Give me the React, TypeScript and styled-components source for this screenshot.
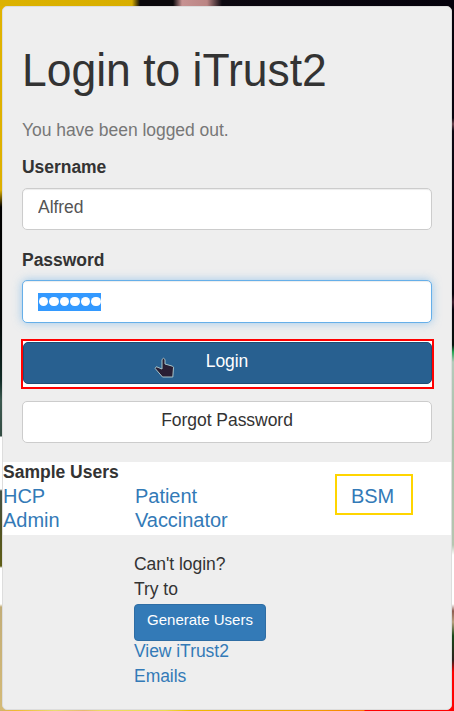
import React from "react";
import styled, { createGlobalStyle, css } from "styled-components";

const GlobalStyle = createGlobalStyle`
  *, *::before, *::after { box-sizing: border-box; }
  html, body { margin: 0; padding: 0; overflow: hidden; }
  body {
    font-family: "Liberation Sans", Arial, sans-serif;
    font-size: 17.5px;
    line-height: 25px;
    letter-spacing: -0.04px;
    color: #333;
  }
`;

const Page = styled.main`
  width: 454px;
  height: 711px;
  padding: 6px 2px 1px;
  background:
    linear-gradient(90deg, #dcb200 0, #d8ae00 132px, #0b090c 140px, #0b090c 173px, #c79292 182px, #bb8584 207px, #0c0810 222px, #05020c 100%) 0 0 / 454px 6px no-repeat,
    linear-gradient(90deg, #d2b36c 0, #f0b82f 15px, #eadb72 55px, #e8b970 84px, #edda65 100px, #eddb4e 165px, #efba00 190px, #f29a00 320px, #ff7500 364px, #f00 365px) 0 710px / 454px 1px no-repeat,
    linear-gradient(#e0b300 0, #deb000 190px, #000 207px, #030606 320px, #102b26 380px, #3c5950 400px, #344d44 436px, #fff 437px, #fff 489px, #475345 491px, #515323 530px, #5f5e16 566px, #fff 568px, #fff 604px, #c2ad78 607px, #d4ba76 711px) 0 0 / 8px 711px no-repeat,
    linear-gradient(#050209 0, #08030d 118px, #67424c 124px, #0c0711 131px, #06020a 294px, #3d2030 302px, #07030c 310px, #07120d 345px, #23a451 352px, #b4cbbb 362px, #acc0a9 440px, #b6c6b1 545px, #fff 555px, #fff 604px, #8c5c50 611px, #b8a17f 622px, #184717 636px, #2d211d 660px, #f00 672px, #f00 711px) 446px 0 / 8px 711px no-repeat;
`;

const Card = styled.section`
  width: 450px;
  height: 704px;
  background: #eee;
  border: 1px solid #ddd;
  border-radius: 5px;
  overflow: hidden;
`;

const LoginForm = styled.form`
  height: 455px;
  padding: 39px 19px 0;
`;

const Title = styled.h1`
  margin: 0;
  font-size: 45px;
  line-height: 50px;
  font-weight: 400;
  letter-spacing: 0;
  transform: scale(0.988, 1.04);
  transform-origin: 0 41px;
`;

const Notice = styled.p`
  margin: 22px 0 12px;
  color: #777;
`;

const Label = styled.label`
  display: block;
  height: 25px;
  margin-bottom: 8px;
  font-weight: 700;
`;

const fieldBox = css`
  display: block;
  width: 410px;
  height: 42px;
  border: 1px solid #ccc;
  border-radius: 5px;
  background: #fff;
  font: inherit;
  letter-spacing: inherit;
`;

const TextInput = styled.input`
  ${fieldBox}
  padding: 4px 15px 8px;
  margin-bottom: 18px;
  color: #555;
  outline: 0;
  box-shadow: inset 0 1px 1px rgba(0, 0, 0, 0.075);
`;

const PasswordField = styled.div`
  ${fieldBox}
  height: 43px;
  padding: 12px 15px;
  margin: -1px 0 16px;
  border-color: #66afe9;
  box-shadow: inset 0 1px 1px rgba(0, 0, 0, 0.075), 0 0 10px rgba(102, 175, 233, 0.6);
`;

const Selection = styled.div`
  display: flex;
  align-items: center;
  gap: 1px;
  width: 63px;
  height: 18px;
  padding: 0 0.5px 1px;
  background: #39f;
`;

const Dot = styled.i`
  flex: none;
  width: 9.5px;
  height: 9.5px;
  border-radius: 50%;
  background: #fff;
`;

const Highlight = styled.div<{ $login?: boolean }>`
  border: 2px solid ${(p) => (p.$login ? "#f00" : "#ffd500")};
  background: #fff;
  ${(p) =>
    p.$login
      ? css`
          position: relative;
          width: 413px;
          height: 50px;
          margin: 0 0 12px -1px;
          padding-top: 1px;
        `
      : css`
          width: 78px;
          height: 41px;
          padding: 8px 0 0 14px;
          margin: -10px 0 0 68px;
        `}
`;

const Button = styled.button<{ $primary?: boolean }>`
  ${fieldBox}
  padding: 0 0 3px;
  color: #333;
  text-align: center;
  ${(p) =>
    p.$primary &&
    css`
      width: 409px;
      padding-right: 1px;
      color: #fff;
      background: #286090;
      border-color: #204d74;
    `}
`;

const Pointer = styled.svg`
  position: absolute;
  left: 131px;
  top: 16px;
`;

const SampleUsers = styled.section`
  height: 73px;
  background: #fff;
`;

const SampleTitle = styled.h2`
  height: 22px;
  margin: 0;
  font-size: 17.5px;
  line-height: 20px;
  letter-spacing: 0;
`;

const UserGrid = styled.div`
  display: grid;
  grid-template-columns: 132px 132px 1fr;
  grid-template-rows: 24px 24px;
`;

const Link = styled.a<{ $large?: boolean }>`
  display: block;
  color: #337ab7;
  text-decoration: none;
  font-size: ${(p) => (p.$large ? "20px" : "17.5px")};
  line-height: ${(p) => (p.$large ? "24px" : "25px")};
`;

const Help = styled.section`
  width: 132px;
  margin: 17px 0 0 131px;
`;

const HelpText = styled.div`
  line-height: 25px;
`;

const GenerateButton = styled.button`
  display: block;
  width: 132px;
  height: 37px;
  margin: 2px 0 -2px;
  padding: 0 0 6px;
  border: 1px solid #2e6da4;
  border-radius: 4px;
  background: #337ab7;
  color: #fff;
  font: 15px "Liberation Sans", Arial, sans-serif;
`;

export default function App() {
  return (
    <>
      <GlobalStyle />
      <Page>
        <Card>
          <LoginForm onSubmit={(e) => e.preventDefault()}>
            <Title>Login to iTrust2</Title>
            <Notice>You have been logged out.</Notice>
            <Label htmlFor="username">Username</Label>
            <TextInput id="username" defaultValue="Alfred" spellCheck={false} />
            <Label>Password</Label>
            <PasswordField>
              <Selection>
                {Array.from({ length: 6 }, (_, i) => (
                  <Dot key={i} />
                ))}
              </Selection>
            </PasswordField>
            <Highlight $login>
              <Button $primary type="submit">Login</Button>
              <Pointer width="21" height="22" viewBox="0 0 21 22">
                <path
                  d="M8 2.5Q9.5 0 11 2.5V7l7.5 2.2 1 1-.7 9.8H8.5L1.2 11.5l1.1-1.8L8 12Z"
                  fill="#291e33"
                  stroke="#a9c5ca"
                  strokeWidth="1"
                  strokeLinejoin="round"
                />
              </Pointer>
            </Highlight>
            <Button type="button">Forgot Password</Button>
          </LoginForm>
          <SampleUsers>
            <SampleTitle>Sample Users</SampleTitle>
            <UserGrid>
              <Link $large>HCP</Link>
              <Link $large>Patient</Link>
              <Highlight>
                <Link $large>BSM</Link>
              </Highlight>
              <Link $large>Admin</Link>
              <Link $large>Vaccinator</Link>
            </UserGrid>
          </SampleUsers>
          <Help>
            <HelpText>Can't login?</HelpText>
            <HelpText>Try to</HelpText>
            <GenerateButton type="button">Generate Users</GenerateButton>
            <Link>View iTrust2 Emails</Link>
          </Help>
        </Card>
      </Page>
    </>
  );
}
